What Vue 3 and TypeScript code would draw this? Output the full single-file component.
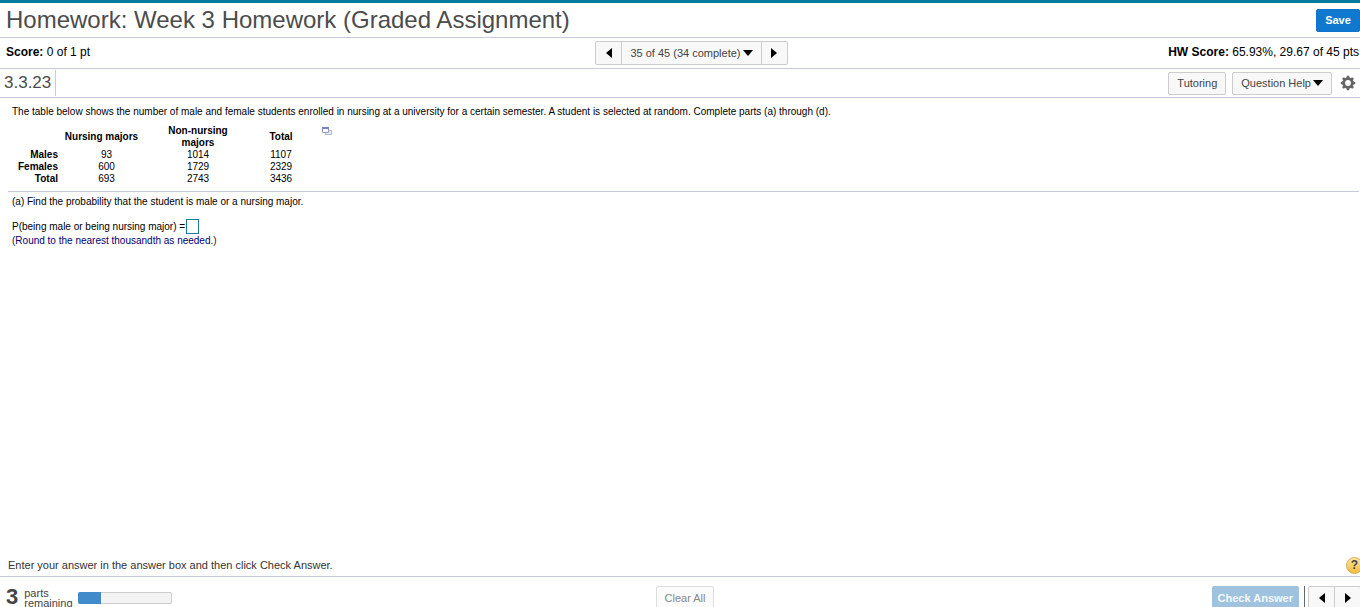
<script setup lang="ts">
import { ref } from 'vue'

interface Row {
  label: string
  values: number[]
}

const rows: Row[] = [
  { label: 'Males', values: [93, 1014, 1107] },
  { label: 'Females', values: [600, 1729, 2329] },
  { label: 'Total', values: [693, 2743, 3436] },
]

const answer = ref('')
const totalParts = 4
const partsRemaining = 3
const progress = `${((totalParts - partsRemaining) / totalParts) * 100}%`
const teeth = [0, 45, 90, 135, 180, 225, 270, 315]
</script>

<template>
  <div class="page">
    <header class="title-bar">
      <h1>Homework: Week 3 Homework (Graded Assignment)</h1>
      <button class="save" type="button">Save</button>
    </header>

    <div class="score-bar">
      <p class="score"><b>Score:</b> 0 of 1 pt</p>
      <nav class="pager" aria-label="Questions">
        <button class="step" type="button" aria-label="Previous question">
          <svg width="6" height="10" viewBox="0 0 6 10"><path d="M6 0v10L0 5z" /></svg>
        </button>
        <button class="current" type="button" aria-haspopup="listbox">
          <span>35 of 45 (34 complete)</span>
          <svg width="10" height="6" viewBox="0 0 10 6"><path d="M0 0h10L5 6z" /></svg>
        </button>
        <button class="step" type="button" aria-label="Next question">
          <svg width="6" height="10" viewBox="0 0 6 10"><path d="M0 0v10l6-5z" /></svg>
        </button>
      </nav>
      <p class="score total"><b>HW Score:</b> 65.93%, 29.67 of 45 pts</p>
    </div>

    <div class="tool-bar">
      <h2>3.3.23</h2>
      <div class="tools">
        <button class="tool" type="button">Tutoring</button>
        <button class="tool" type="button" aria-haspopup="menu">
          <span>Question Help</span>
          <svg width="10" height="6" viewBox="0 0 10 6"><path d="M0 0h10L5 6z" /></svg>
        </button>
        <button class="gear" type="button" aria-label="Settings">
          <svg width="16" height="16" viewBox="0 0 16 16">
            <circle cx="8" cy="8" r="4.300" fill="none" stroke="#666" stroke-width="2.800" />
            <path
              v-for="angle in teeth"
              :key="angle"
              d="M6.300 3.200 6.900 0.800h2.200l.6 2.400z"
              fill="#666"
              :transform="`rotate(${angle} 8 8)`"
            />
          </svg>
        </button>
      </div>
    </div>

    <main class="question">
      <p class="prompt">
        The table below shows the number of male and female students enrolled in nursing at a
        university for a certain semester. A student is selected at random. Complete parts (a)
        through (d).
      </p>
      <div class="data">
        <table>
          <thead>
            <tr>
              <td></td>
              <th class="first" scope="col">Nursing majors</th>
              <th scope="col">Non-nursing majors</th>
              <th scope="col">Total</th>
            </tr>
          </thead>
          <tbody>
            <tr v-for="row in rows" :key="row.label">
              <th scope="row">{{ row.label }}</th>
              <td v-for="(value, i) in row.values" :key="i">{{ value }}</td>
            </tr>
          </tbody>
        </table>
        <button class="popout" type="button" aria-label="Open table in a new window">
          <svg width="11" height="9" viewBox="0 0 11 9">
            <rect x="3.500" y="3.500" width="6" height="4" fill="#e4e8f5" stroke="#b5bedd" />
            <rect x="0.500" y="0.500" width="6" height="5" rx="0.500" fill="#fff" stroke="#8f9dce" />
            <path d="M0 0h7v2H0z" fill="#7384c0" />
          </svg>
        </button>
      </div>

      <section class="part">
        <p>(a) Find the probability that the student is male or a nursing major.</p>
        <div class="answer">
          <label for="answer">P(being male or being nursing major) =</label>
          <input id="answer" v-model="answer" type="text" />
        </div>
        <p class="hint"><span>(</span>Round to the nearest thousandth as needed.<span>)</span></p>
      </section>
    </main>

    <div class="instruction">
      <p>Enter your answer in the answer box and then click Check Answer.</p>
      <button class="help" type="button" aria-label="Help">?</button>
    </div>

    <footer class="footer">
      <div class="parts">
        <strong>3</strong>
        <span class="parts-text">parts<br />remaining</span>
        <div
          class="track"
          role="progressbar"
          aria-label="Parts completed"
          aria-valuemin="0"
          :aria-valuemax="totalParts"
          :aria-valuenow="totalParts - partsRemaining"
        >
          <div class="fill" :style="{ width: progress }"></div>
        </div>
      </div>
      <button class="clear" type="button">Clear All</button>
      <div class="actions">
        <button class="check" type="button">Check Answer</button>
        <div class="pager">
          <button class="step" type="button" aria-label="Previous">
            <svg width="6" height="10" viewBox="0 0 6 10"><path d="M6 0v10L0 5z" /></svg>
          </button>
          <button class="step" type="button" aria-label="Next">
            <svg width="6" height="10" viewBox="0 0 6 10"><path d="M0 0v10l6-5z" /></svg>
          </button>
        </div>
      </div>
    </footer>
  </div>
</template>

<style>
body {
  margin: 0;
  background: #fff;
}
</style>

<style scoped>
.page {
  box-sizing: border-box;
  display: flex;
  flex-direction: column;
  height: 100vh;
  overflow: hidden;
  border-top: 3px solid #007a9e;
  color: #000;
  font-family: 'Liberation Sans', Arial, sans-serif;
  font-size: 11px;
}

.page * {
  box-sizing: border-box;
}

h1,
h2,
p {
  margin: 0;
  font-weight: normal;
}

button {
  padding: 0;
  border: 1px solid #ccc;
  background: #f8f8f8;
  color: #444;
  font-family: inherit;
  font-size: 11px;
  cursor: pointer;
}

svg {
  display: block;
  flex: none;
}

.title-bar,
.score-bar,
.tool-bar {
  display: flex;
  flex: none;
  align-items: center;
  justify-content: space-between;
  border-bottom: 1px solid #c8cbdc;
}

.title-bar {
  height: 35px;
  padding-left: 6px;
}

h1 {
  color: #4c4c4c;
  font-size: 24px;
  line-height: 32px;
}

.save {
  width: 44px;
  height: 23px;
  border-color: #0f75cb;
  border-radius: 2px;
  background: #1078ce;
  color: #fff;
  font-weight: bold;
}

.score-bar {
  display: grid;
  grid-template-columns: 1fr auto 1fr;
  height: 31px;
  padding: 0 1px 0 6px;
}

.score {
  padding-bottom: 2px;
  font-size: 12px;
  line-height: 16px;
}

.total {
  text-align: right;
}

.pager {
  display: flex;
}

.score-bar .pager {
  margin-left: 18px;
}

.pager button {
  display: flex;
  align-items: center;
  justify-content: center;
  height: 24px;
}

.step {
  width: 27px;
}

.step:first-child {
  border-radius: 2px 0 0 2px;
}

.step:last-child {
  margin-left: -1px;
  border-radius: 0 2px 2px 0;
}

.current {
  gap: 2px;
  margin-left: -1px;
  padding: 0 8px;
}

.tool-bar {
  height: 29px;
}

h2 {
  height: 26px;
  padding: 0 4px 0 4px;
  border-right: 1px solid #c8cbdc;
  color: #4c4c4c;
  font-size: 17px;
  line-height: 25px;
}

.tools {
  display: flex;
  align-items: center;
  gap: 6px;
  padding-right: 4px;
}

.tool {
  display: flex;
  align-items: center;
  gap: 2px;
  height: 23px;
  padding: 0 8px;
  border-radius: 2px;
}

.gear {
  margin-left: 2px;
  border: 0;
  background: none;
}

.question {
  flex: 1;
  min-height: 0;
  padding: 7px 1px 0 8px;
  font-size: 10px;
  line-height: 14px;
}

.prompt {
  padding-left: 4px;
}

.data {
  display: flex;
  align-items: flex-start;
  padding: 6px 0 6px 4px;
  border-bottom: 1px solid #c8cbdc;
}

table {
  border-collapse: collapse;
  line-height: 12px;
}

th,
td {
  width: 80px;
  padding: 0;
  text-align: center;
}

thead th:nth-child(3) {
  padding: 0 12px;
}

tr > :first-child {
  width: 46px;
  text-align: right;
}

tr > :nth-child(2) {
  width: 97px;
}

.first {
  padding-right: 10px;
}

tr > :nth-child(3) {
  width: 86px;
}

.popout {
  margin: 2px 0 0 1px;
  border: 0;
  background: none;
}

.part {
  padding: 3px 4px 0;
}

.answer {
  display: flex;
  align-items: center;
  gap: 1px;
  padding-top: 10px;
}

.answer label {
  line-height: 15px;
}

input {
  width: 13px;
  height: 15px;
  padding: 0;
  border: 1px solid #177ba0;
  font: inherit;
}

.hint {
  color: #000073;
}

.hint span {
  color: #222;
}

.instruction {
  display: flex;
  flex: none;
  align-items: center;
  justify-content: space-between;
  height: 22px;
  padding-left: 8px;
  border-bottom: 1px solid #c8cbdc;
  color: #333;
}

.instruction p {
  padding-bottom: 2px;
}

.help {
  width: 17px;
  height: 17px;
  margin-right: -3px;
  border-color: #d5ae50;
  border-radius: 50%;
  background: linear-gradient(#ffe5a0, #f4bd3a);
  color: #444;
  font-size: 12px;
  font-weight: bold;
  line-height: 15px;
}

.footer {
  display: grid;
  flex: none;
  grid-template-columns: 1fr auto 1fr;
  align-items: start;
  height: 30px;
  padding-top: 9px;
  overflow: hidden;
}

.parts {
  display: flex;
  align-items: flex-start;
  padding-left: 6px;
  color: #444;
}

.parts strong {
  font-size: 22px;
  line-height: 22px;
}

.parts-text {
  margin: 2px 5px 0 6px;
  line-height: 10px;
}

.track {
  width: 94px;
  height: 12px;
  margin-top: 6px;
  overflow: hidden;
  border-radius: 2px;
  background: #f3f3f3;
  box-shadow: inset 0 0 0 1px #ccc;
}

.fill {
  height: 100%;
  background: #428bca;
}

.clear,
.check {
  height: 24px;
  border-radius: 2px;
}

.clear {
  margin-left: 10px;
  padding: 0 8px;
  border-color: #ddd;
  background: #fbfbfb;
  color: #888;
}

.actions {
  display: flex;
  justify-content: flex-end;
  margin-right: -1px;
}

.check {
  padding: 0 5px;
  border-color: #9fc2de;
  background: #9fc2de;
  color: #f5f9fc;
  font-weight: bold;
}

.actions .pager {
  margin-left: 5px;
  padding-left: 3px;
  border-left: 1px solid #666;
}
</style>
